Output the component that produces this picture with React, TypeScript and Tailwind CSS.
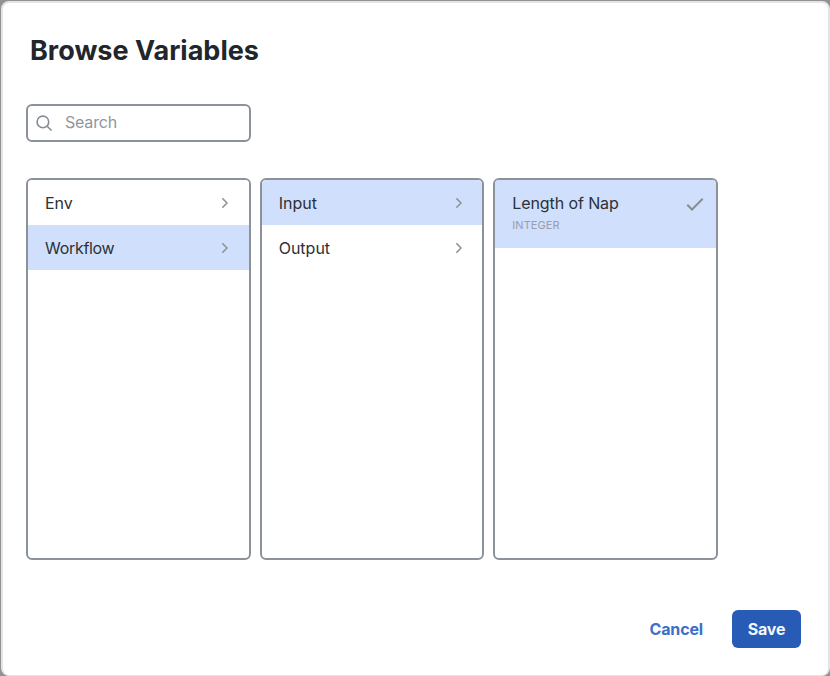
import React from "react";

type Item = { label: string; type?: string; selected?: boolean; tracking?: string };

const columns: Item[][] = [
  [{ label: "Env", tracking: "tracking-[-0.1px]" }, { label: "Workflow", selected: true, tracking: "tracking-[-0.3px]" }],
  [{ label: "Input", selected: true }, { label: "Output" }],
  [{ label: "Length of Nap", type: "INTEGER", selected: true, tracking: "tracking-[-0.1px]" }],
];

function Chevron() {
  return (
    <svg className="mr-[19.5px] h-[12px] w-[8px]" viewBox="0 0 8 12" fill="none" stroke="#90959b" strokeWidth="1.5">
      <path d="M1.4 1.4 6 6 1.4 10.6" />
    </svg>
  );
}

function Check() {
  return (
    <svg className="mt-[17px] mr-[12px] h-[15px] w-[18px]" viewBox="0 0 18 15" fill="none" stroke="#878d93" strokeWidth="2">
      <path d="M1.3 7.8 6 12.5 16.7 1.8" />
    </svg>
  );
}

function Row({ item }: { item: Item }) {
  const bg = item.selected ? "bg-[#d0dffb]" : "bg-white";
  const tracking = item.tracking ?? "tracking-normal";
  if (item.type) {
    return (
      <div className={`flex h-[68px] justify-between pl-[17px] ${bg}`}>
        <div className="pt-[11px]">
          <div className={`text-[16px] leading-6 ${tracking}`}>{item.label}</div>
          <div className="mt-[2px] text-[11px] leading-4 tracking-[0.05px] text-[#979ead]">{item.type}</div>
        </div>
        <Check />
      </div>
    );
  }
  return (
    <div className={`flex h-[45px] items-center justify-between pl-[17px] ${bg}`}>
      <span className={`text-[16px] leading-6 ${tracking}`}>{item.label}</span>
      <Chevron />
    </div>
  );
}

export default function App() {
  return (
    <div className="h-[676px] w-[830px] overflow-hidden bg-[#929292] pt-px pl-px font-['Inter',sans-serif] text-[#2b3138]">
      <div className="flex h-[675px] w-[829px] flex-col rounded-[8px] border-2 border-b border-[#e3e4e7] bg-white pt-[31px] pl-[23px]">
        <h1 className="pl-[4px] text-[27px] leading-[34px] font-bold text-[#21262c]">Browse Variables</h1>
        <div className="mt-[36px] flex h-[38px] w-[225px] items-center rounded-[6px] border-2 border-[#8b929b] pl-[8px]">
          <svg className="h-[17px] w-[17px]" viewBox="0 0 17 17" fill="none" stroke="#858c95" strokeWidth="1.6">
            <circle cx="6.9" cy="6.9" r="5.8" />
            <path d="m11.2 11.2 4.3 4.3" />
          </svg>
          <span className="-mt-[2px] ml-[12px] text-[16px] tracking-[-0.2px] text-[#90969e]">Search</span>
        </div>
        <div className="mt-[36px] flex gap-[9px]">
          {columns.map((items, i) => (
            <div key={i} className="h-[382px] w-[224.67px] overflow-hidden rounded-[6px] border-2 border-[#8b929b]">
              {items.map((item) => (
                <Row key={item.label} item={item} />
              ))}
            </div>
          ))}
        </div>
        <div className="mt-[50px] mr-[27px] flex items-center justify-end gap-[29px] text-[16px] font-bold tracking-[-0.15px]">
          <button className="text-[#3c6fca]">Cancel</button>
          <button className="h-[38px] w-[69px] rounded-[6px] bg-[#275bb6] text-[#f2f6fc]">Save</button>
        </div>
      </div>
    </div>
  );
}
